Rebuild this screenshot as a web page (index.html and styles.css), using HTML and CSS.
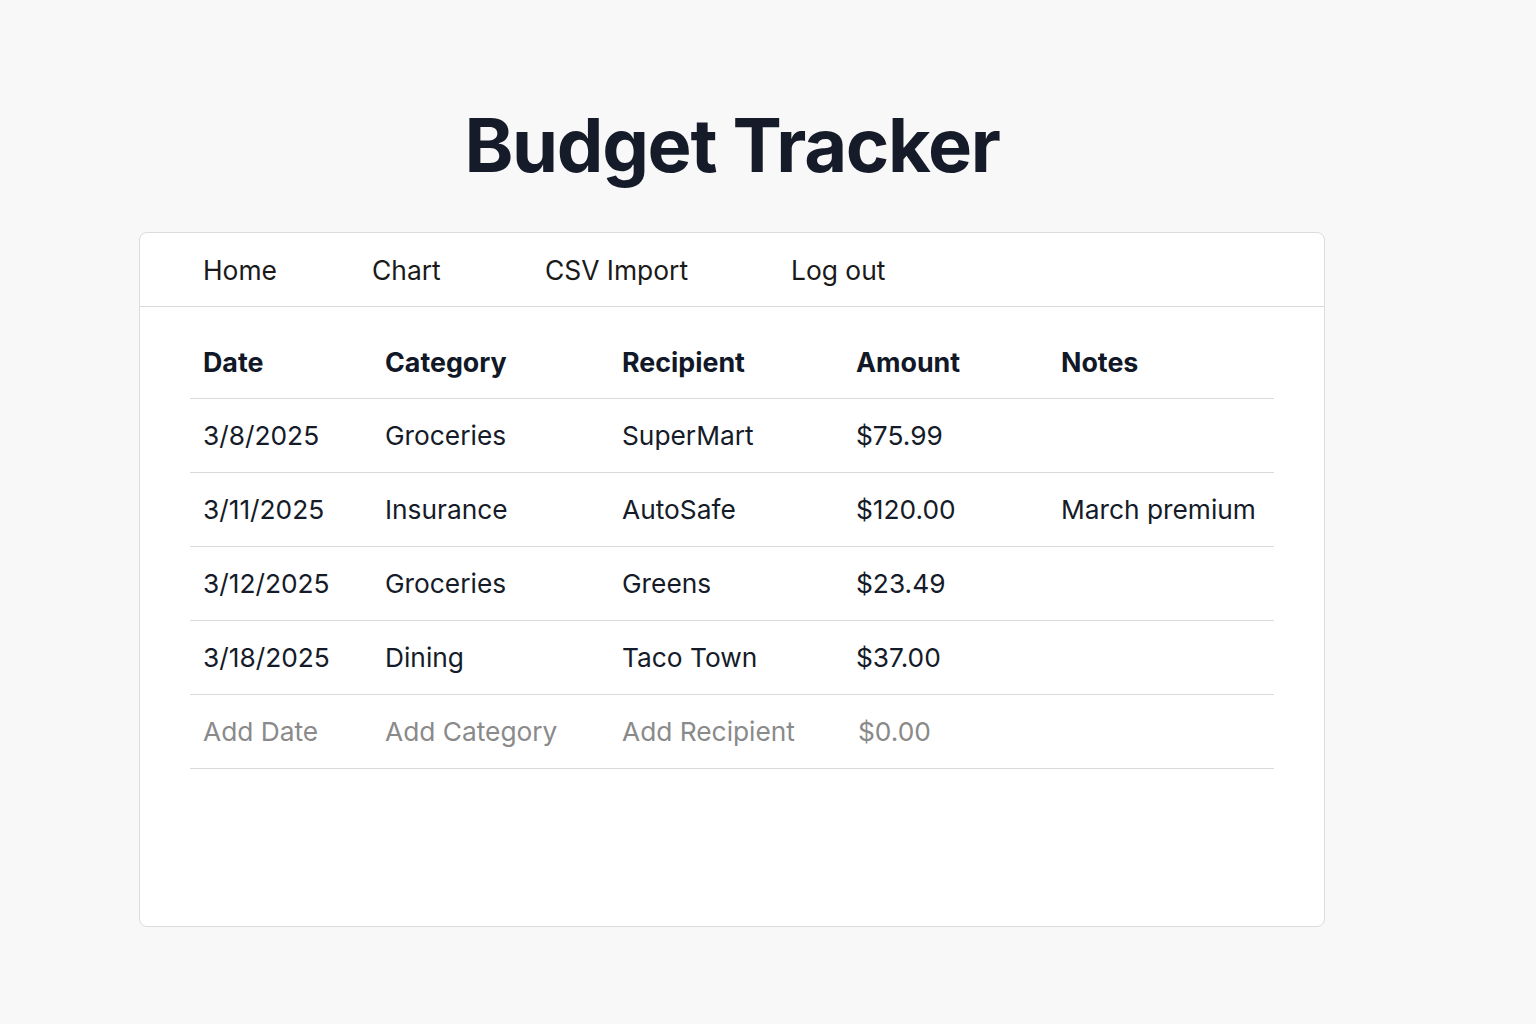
FILE: index.html
```html
<!DOCTYPE html>
<html lang="en">
<head>
<meta charset="utf-8">
<title>Budget Tracker</title>
<link rel="stylesheet" href="styles.css">
</head>
<body>
<main class="page">
  <h1 class="title">Budget Tracker</h1>
  <section class="card">
    <nav class="nav">
      <a class="nav-link nav-home" href="#">Home</a>
      <a class="nav-link nav-chart" href="#">Chart</a>
      <a class="nav-link nav-csv" href="#">CSV Import</a>
      <a class="nav-link nav-logout" href="#">Log out</a>
    </nav>
    <div class="table-wrap">
      <table class="table">
        <colgroup>
          <col class="c-date"><col class="c-cat"><col class="c-rec"><col class="c-amt"><col class="c-notes">
        </colgroup>
        <thead>
          <tr><th>Date</th><th>Category</th><th>Recipient</th><th>Amount</th><th>Notes</th></tr>
        </thead>
        <tbody>
          <tr><td>3/8/2025</td><td>Groceries</td><td>SuperMart</td><td>$75.99</td><td></td></tr>
          <tr><td>3/11/2025</td><td>Insurance</td><td>AutoSafe</td><td>$120.00</td><td>March premium</td></tr>
          <tr><td>3/12/2025</td><td>Groceries</td><td>Greens</td><td>$23.49</td><td></td></tr>
          <tr><td>3/18/2025</td><td>Dining</td><td>Taco Town</td><td>$37.00</td><td></td></tr>
          <tr class="add-row"><td>Add Date</td><td>Add Category</td><td>Add Recipient</td><td class="amt-ph">$0.00</td><td></td></tr>
        </tbody>
      </table>
    </div>
  </section>
</main>
</body>
</html>
```
FILE: styles.css
```css
html, body {
  margin: 0;
  padding: 0;
  background: #f8f8f8;
}
body {
  font-family: Inter, "Noto Sans", "Liberation Sans", sans-serif;
  color: #111827;
}
.page {
  width: 1186px;
  margin-left: 139px;
  padding-top: 98px;
}
.title {
  margin: 0;
  text-align: center;
  font-size: 74px;
  font-weight: 700;
  line-height: 94px;
  letter-spacing: -1.3px;
  color: #151b28;
}
.card {
  margin-top: 40px;
  background: #ffffff;
  border: 1px solid #dcdcdc;
  border-radius: 8px;
  height: 693px;
}
.nav {
  display: flex;
  align-items: center;
  height: 73px;
  border-bottom: 1px solid #d9d9d9;
  padding-left: 63px;
}
.nav-link {
  font-size: 26.4px;
  color: #1a1a1a;
  text-decoration: none;
}
.nav-home { width: 169px; }
.nav-chart { width: 173px; }
.nav-csv { width: 246px; }
.table-wrap {
  padding: 18px 50px 0 50px;
}
.table {
  width: 1084px;
  border-collapse: collapse;
  table-layout: fixed;
  font-size: 26.3px;
}
.c-date { width: 182px; }
.c-cat { width: 237px; }
.c-rec { width: 234px; }
.c-amt { width: 205px; }
.c-notes { width: 226px; }
.table th, .table td {
  height: 73px;
  padding: 0 0 0 13px;
  text-align: left;
  vertical-align: middle;
  border-bottom: 1px solid #d9d9d9;
  white-space: nowrap;
}
.table th {
  font-weight: 700;
  font-size: 26.8px;
  color: #111827;
}
.table td {
  font-weight: 400;
  color: #151b28;
}
.add-row td {
  color: #8a8a8a;
}
.add-row .amt-ph {
  padding-left: 15px;
}
```
